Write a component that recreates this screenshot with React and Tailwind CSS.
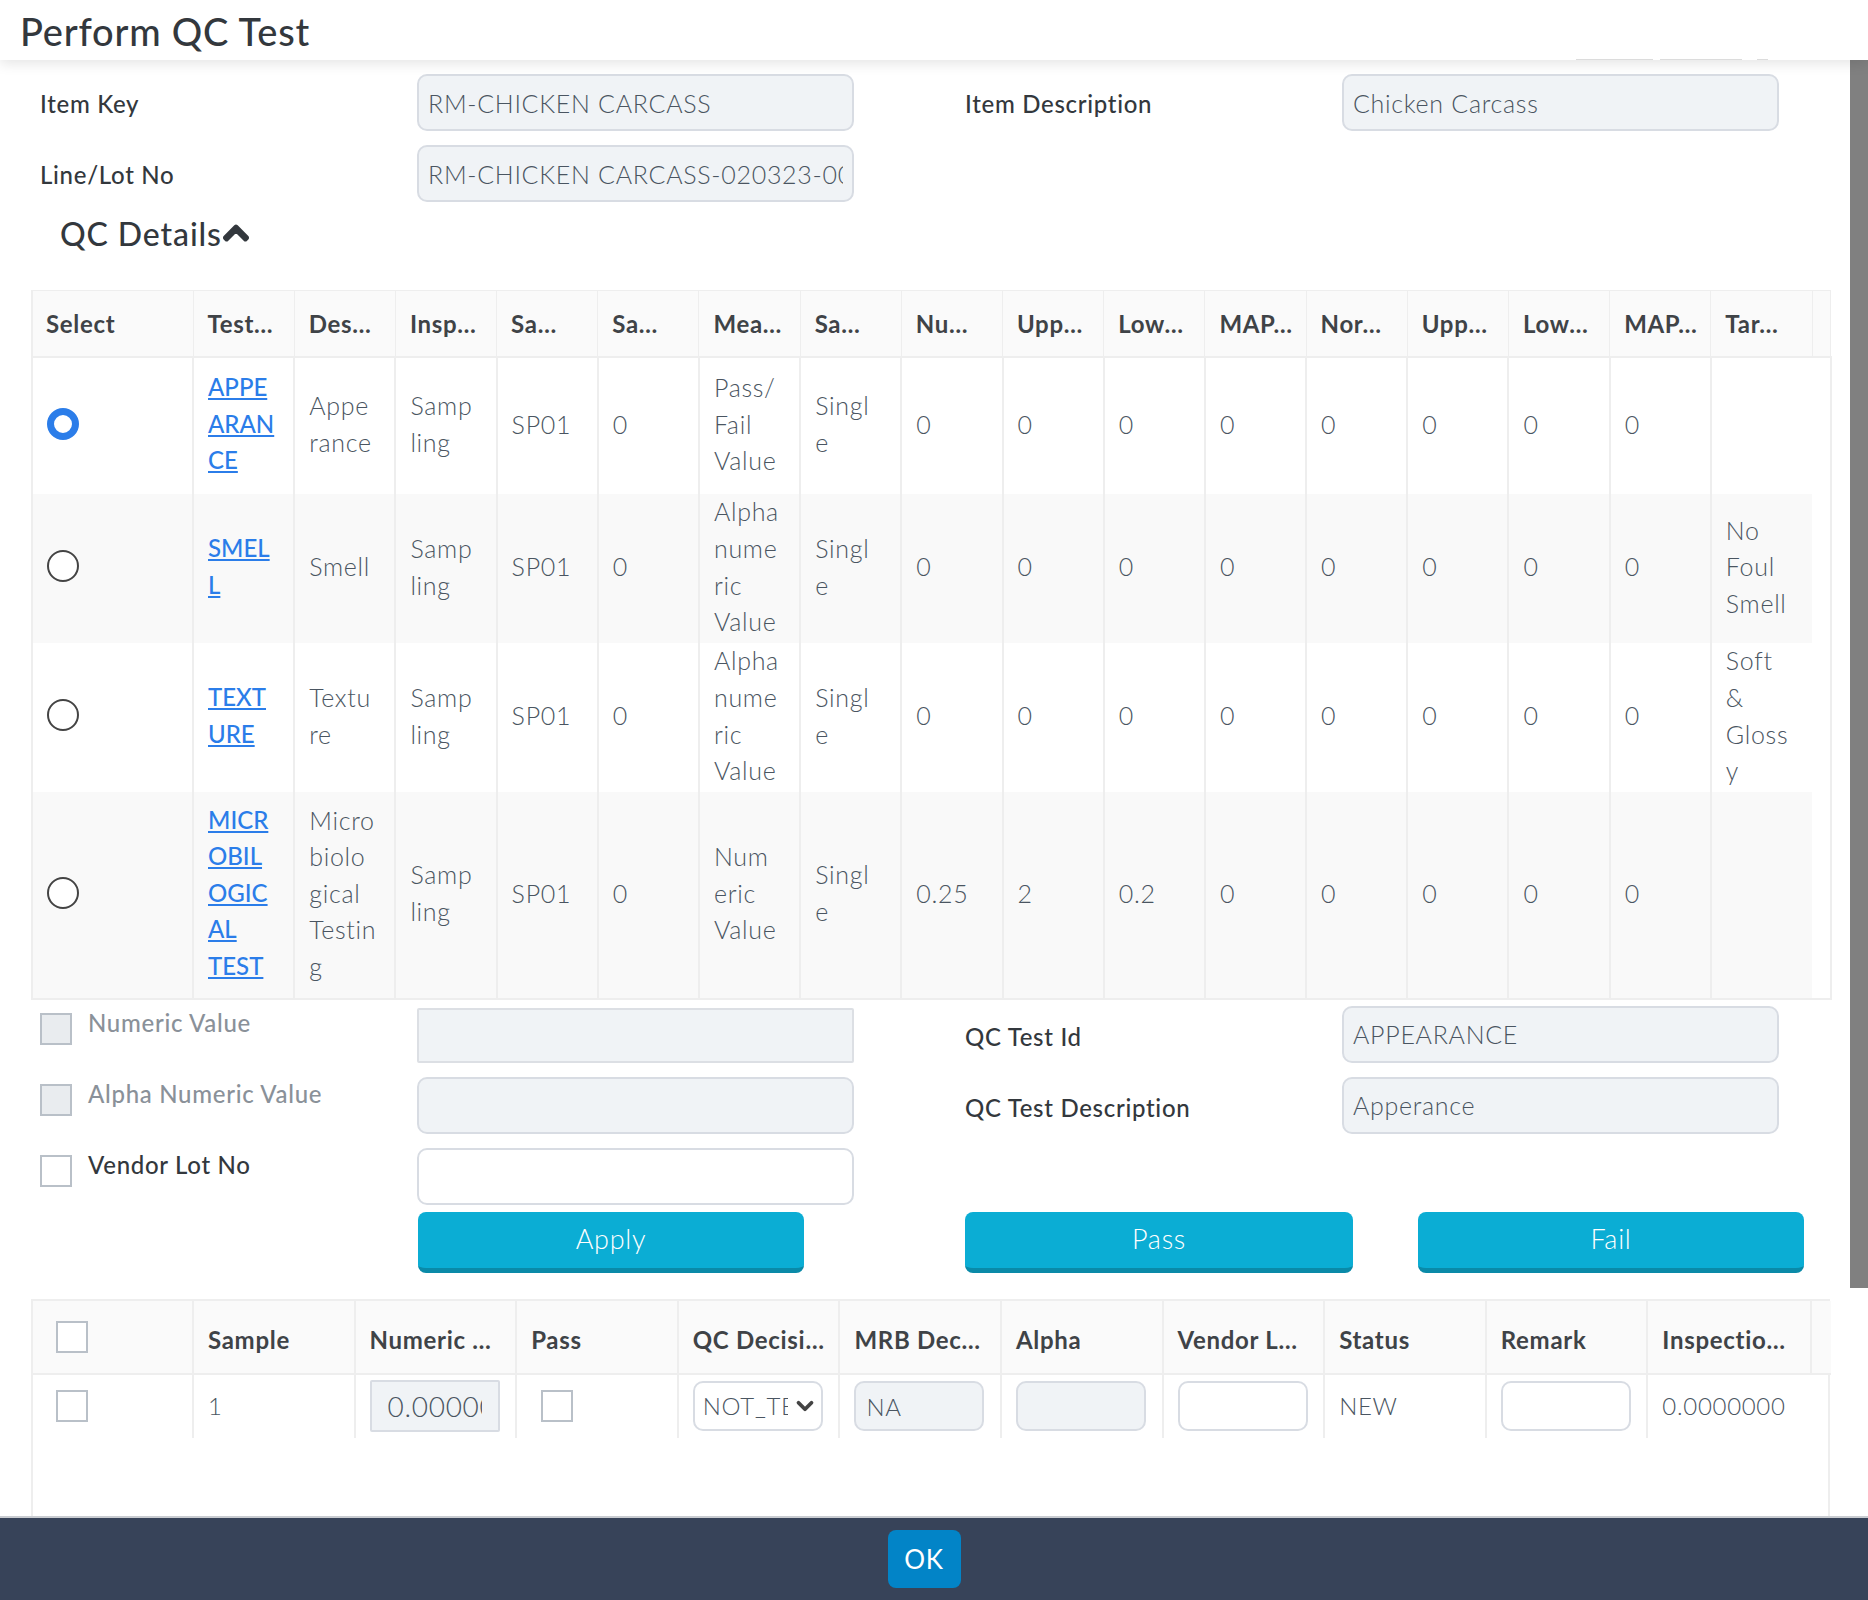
import React from 'react'
import { FaChevronUp } from 'react-icons/fa'
import { ChevronDown } from 'lucide-react'

const inputCls = 'w-full h-[57px] px-[9px] rounded-[10px] border-2 border-[#d8dce3] text-[25px] text-[#4a5561] font-light outline-none'
const readCls = inputCls + ' bg-[#f0f3f6]'
const checkCls = 'appearance-none shrink-0 w-8 h-8 border-2 border-[#b9c0c8] rounded-none'
const smallInput = 'w-[130px] h-[50px] px-[10px] rounded-[10px] border-2 border-[#d8dce3] font-light text-[#4a5561] outline-none'
const bodyBorder = 'border-r-2 border-[#eeeeee]'
const btnCls = 'h-[61px] rounded-[8px] border-b-[5px] border-[#0a8aa8] bg-[#0badd4] text-white text-[27px] font-light'
const sampleTh = 'border-r-2 border-b-2 border-[#eeeeee] pl-[14px] pt-[7px] text-left font-bold text-[#3f4347] whitespace-nowrap overflow-hidden'

const qcHeaders = ['Select', 'Test…', 'Des…', 'Insp…', 'Sa…', 'Sa…', 'Mea…', 'Sa…', 'Nu…', 'Upp…', 'Low…', 'MAP…', 'Nor…', 'Upp…', 'Low…', 'MAP…', 'Tar…']

const sampleHeaders = ['Sample', 'Numeric …', 'Pass', 'QC Decisi…', 'MRB Dec…', 'Alpha', 'Vendor L…', 'Status', 'Remark']

const qcRows = [
  {
    h: 'h-[137px]',
    checked: true,
    test: ['APPE', 'ARAN', 'CE'],
    desc: ['Appe', 'rance'],
    measure: ['Pass/', 'Fail', 'Value'],
    num: ['0', '0', '0'],
    target: [],
  },
  {
    h: 'h-[149px]',
    test: ['SMEL', 'L'],
    desc: ['Smell'],
    measure: ['Alpha', 'nume', 'ric', 'Value'],
    num: ['0', '0', '0'],
    target: ['No', 'Foul', 'Smell'],
  },
  {
    h: 'h-[149px]',
    test: ['TEXT', 'URE'],
    desc: ['Textu', 're'],
    measure: ['Alpha', 'nume', 'ric', 'Value'],
    num: ['0', '0', '0'],
    target: ['Soft', '&', 'Gloss', 'y'],
  },
  {
    h: 'h-[207px]',
    test: ['MICR', 'OBIL', 'OGIC', 'AL', 'TEST'],
    desc: ['Micro', 'biolo', 'gical', 'Testin', 'g'],
    measure: ['Num', 'eric', 'Value'],
    num: ['0.25', '2', '0.2'],
    target: [],
  },
]

const Lines = ({ items }) => items.map((t, i) => <div key={i}>{t}</div>)

const Td = ({ children, last }) => (
  <td className={'px-[14px] py-0 align-middle overflow-hidden ' + (last ? '' : bodyBorder)}>
    <div className="-mt-[3px]">{children}</div>
  </td>
)

const FormRow = ({ children }) => (
  <div className="grid grid-cols-[377px_437px_111px_377px_437px] items-center h-[57px] ml-10">{children}</div>
)

const CheckLabel = ({ label, disabled }) => (
  <label className={'flex items-start gap-4 h-full pt-[7px] ' + (disabled ? 'text-[#8a9199]' : 'text-[#33383d]')}>
    <input type="checkbox" disabled={disabled} className={checkCls + (disabled ? ' bg-[#e9ecef]' : ' bg-white')} />
    <span className="font-medium leading-[36px] -mt-[8px]">{label}</span>
  </label>
)

export default function App() {
  return (
    <div className="h-[1600px] flex flex-col overflow-hidden bg-white text-[24px] tracking-[0.7px] text-[#33383d] font-['Lato',sans-serif]">
      {/* Header */}
      <div className="relative z-10 h-[60px] shrink-0 bg-white pl-5 pt-[2px] flex items-center shadow-[0_4px_12px_rgba(0,0,0,0.1)]">
        <h1 className="text-[38px] font-medium text-[#33383d] tracking-[0.8px]">Perform QC Test</h1>
        <span className="absolute bottom-0 left-[1576px] w-[77px] h-px bg-[#dcdcdc]" />
        <span className="absolute bottom-0 left-[1660px] w-[82px] h-px bg-[#dcdcdc]" />
        <span className="absolute bottom-0 left-[1757px] w-[11px] h-px bg-[#dcdcdc]" />
      </div>

      <div className="flex-1 min-h-0 flex">
        <div className="flex-1 min-w-0 flex flex-col">
          {/* Item fields */}
          <div className="mt-[14px] flex flex-col gap-[14px]">
            <FormRow>
              <span className="font-medium pt-[3px]">Item Key</span>
              <input readOnly value="RM-CHICKEN CARCASS" className={readCls} />
              <span />
              <span className="font-medium pt-[3px]">Item Description</span>
              <input readOnly value="Chicken Carcass" className={readCls} />
            </FormRow>
            <FormRow>
              <span className="font-medium pt-[3px]">Line/Lot No</span>
              <input readOnly value="RM-CHICKEN CARCASS-020323-001" className={readCls} />
            </FormRow>
          </div>

          <div className="ml-[60px] mt-3 mb-9 h-10 flex items-center text-[32px] font-medium tracking-[0.9px]">
            QC Details
            <FaChevronUp stroke="currentColor" strokeWidth={40} className="w-[28px] h-[28px] -mt-[2px]" />
          </div>

          {/* QC tests table */}
          <div className="ml-[31px] w-[1799px]">
            <table className="table-fixed w-full border-collapse leading-[36.6px] border-l-2 border-b-2 border-[#eeeeee]">
              <thead>
                <tr className="h-[66px] bg-[#fafafa]">
                  {qcHeaders.map((h, i) => (
                    <th key={i} className={'border border-[#eeeeee] border-b-2 pt-[2px] text-left font-bold text-[#3f4347] ' + (i === 0 ? 'w-[161px] pl-[13px]' : 'w-[101.2px] pl-[14px]')}>
                      {h}
                    </th>
                  ))}
                  <th className="w-[18.8px] border border-[#eeeeee] border-b-2" />
                </tr>
              </thead>
              <tbody className="text-[25px] font-light text-[#4a5561]">
                {qcRows.map((r, i) => (
                  <tr key={i} className={r.h + (i % 2 === 1 ? ' bg-[#f9f9f9]' : '')}>
                    <Td>
                      <input
                        type="radio"
                        name="qc"
                        defaultChecked={r.checked}
                        className="appearance-none block w-8 h-8 m-0 -mt-[4px] rounded-full bg-white border-2 border-[#444444] checked:border-[7px] checked:border-[#2b7de9]"
                      />
                    </Td>
                    <Td>
                      <a href="#" className="block text-[24px] tracking-normal font-medium text-[#2b7de9] underline"><Lines items={r.test} /></a>
                    </Td>
                    <Td><Lines items={r.desc} /></Td>
                    <Td><Lines items={['Samp', 'ling']} /></Td>
                    <Td>SP01</Td>
                    <Td>0</Td>
                    <Td><Lines items={r.measure} /></Td>
                    <Td><Lines items={['Singl', 'e']} /></Td>
                    {r.num.map((n, j) => <Td key={j}>{n}</Td>)}
                    {[0, 1, 2, 3, 4].map((j) => <Td key={j}>0</Td>)}
                    <Td last><Lines items={r.target} /></Td>
                    <td className="border-r-2 border-[#eeeeee] bg-white" />
                  </tr>
                ))}
              </tbody>
            </table>
          </div>

          {/* Value entry */}
          <div className="mt-[6px] flex flex-col gap-[14px]">
            <FormRow>
              <CheckLabel label="Numeric Value" disabled />
              <input disabled className="w-full h-[55px] self-end rounded-[2px] border-2 border-[#dcdfe4] bg-[#f0f3f6]" />
              <span />
              <span className="font-medium pt-[6px]">QC Test Id</span>
              <input readOnly value="APPEARANCE" className={readCls} />
            </FormRow>
            <FormRow>
              <CheckLabel label="Alpha Numeric Value" disabled />
              <input disabled className={readCls} />
              <span />
              <span className="font-medium pt-[6px]">QC Test Description</span>
              <input readOnly value="Apperance" className={readCls} />
            </FormRow>
            <FormRow>
              <CheckLabel label="Vendor Lot No" />
              <input className={inputCls + ' bg-white'} />
            </FormRow>
          </div>

          <div className="mt-[7px] flex ml-[418px]">
            <button className={btnCls + ' w-[386px]'}>Apply</button>
            <button className={btnCls + ' ml-[161px] w-[388px]'}>Pass</button>
            <button className={btnCls + ' ml-[65px] w-[386px]'}>Fail</button>
          </div>

          {/* Samples table */}
          <div className="mt-[26px] ml-[31px] w-[1799px] flex-1 min-h-0 border-x-2 border-t-2 border-[#eeeeee]">
            <table className="table-fixed w-full border-collapse">
              <thead>
                <tr className="h-[73px] bg-[#fafafa]">
                  <th className="w-[160px] border-r-2 border-b-2 border-[#eeeeee] pl-[23px] text-left">
                    <input type="checkbox" className={checkCls + ' block bg-white'} />
                  </th>
                  {sampleHeaders.map((h, i) => (
                    <th key={i} className={sampleTh + ' w-[161.6px]'}>{h}</th>
                  ))}
                  <th className={sampleTh + ' w-[164px]'}>Inspectio…</th>
                  <th className="w-[19.6px] border-b-2 border-[#eeeeee]" />
                </tr>
              </thead>
              <tbody className="font-light text-[#4a5561]">
                <tr className="h-[64px]">
                  <td className={bodyBorder + ' pl-[23px]'}>
                    <input type="checkbox" className={checkCls + ' block bg-white'} />
                  </td>
                  <td className={bodyBorder + ' px-[14px]'}>1</td>
                  <td className={bodyBorder + ' px-[14px]'}>
                    <input disabled value="0.0000000" className="w-[130px] h-[52px] px-[16px] rounded-[2px] border-2 border-[#d8dce3] bg-[#f0f3f6] text-[#4a5561] text-[28px] font-light" />
                  </td>
                  <td className={bodyBorder + ' pl-[24px]'}>
                    <input type="checkbox" className={checkCls + ' block bg-white'} />
                  </td>
                  <td className={bodyBorder + ' px-[14px]'}>
                    <div className="relative w-[130px] h-[50px]">
                      <select className="appearance-none w-full h-full pl-[8px] pr-[33px] rounded-[10px] border-2 border-[#d8dce3] bg-white">
                        <option>NOT_TESTED</option>
                      </select>
                      <ChevronDown strokeWidth={3.5} className="absolute right-[5px] top-[12px] w-[26px] h-[26px] text-[#444444] pointer-events-none" />
                    </div>
                  </td>
                  <td className={bodyBorder + ' px-[14px]'}>
                    <input readOnly value="NA" className={smallInput + ' bg-[#f0f3f6]'} />
                  </td>
                  <td className={bodyBorder + ' px-[14px]'}>
                    <input disabled className={smallInput + ' bg-[#f0f3f6]'} />
                  </td>
                  <td className={bodyBorder + ' px-[14px]'}>
                    <input className={smallInput + ' bg-white'} />
                  </td>
                  <td className={bodyBorder + ' px-[14px]'}>NEW</td>
                  <td className={bodyBorder + ' px-[14px]'}>
                    <input className={smallInput + ' bg-white'} />
                  </td>
                  <td className="px-[14px] whitespace-nowrap" colSpan={2}>0.0000000</td>
                </tr>
              </tbody>
            </table>
          </div>
        </div>

        {/* Scrollbar */}
        <div className="w-[18px] shrink-0 bg-white">
          <div className="h-[1228px] bg-[#808080]" />
        </div>
      </div>

      {/* Footer */}
      <div className="h-[84px] shrink-0 bg-[#374359] border-t-2 border-[#c9ccd1] pt-3 pr-5 flex justify-center items-start">
        <button className="w-[73px] h-[58px] rounded-[8px] bg-[#0284c7] text-white text-[26px]">OK</button>
      </div>
    </div>
  )
}
